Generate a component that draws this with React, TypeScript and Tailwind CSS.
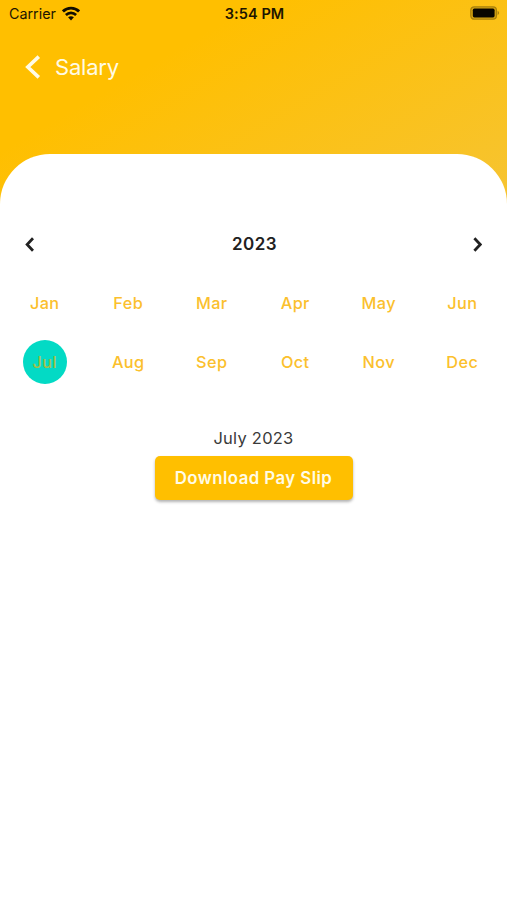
import React from 'react';

const months = ['Jan', 'Feb', 'Mar', 'Apr', 'May', 'Jun', 'Jul', 'Aug', 'Sep', 'Oct', 'Nov', 'Dec'];

function Wifi() {
  return (
    <svg className="-mt-px ml-[6px] h-[15px] w-[18px]" viewBox="0 0 18 15" fill="none" stroke="#120e00" strokeWidth="2.9">
      <path d="M0.9 5.5C5.4 1 12.6 1 17.1 5.5" />
      <path d="M3.9 9C6.8 6.1 11.2 6.1 14.1 9" strokeWidth="2.6" />
      <path d="M6.1 11.3Q9 9.2 11.9 11.3L9 14.4Z" fill="#120e00" stroke="none" />
    </svg>
  );
}

function Battery() {
  return (
    <svg className="-mt-px h-[14px] w-[30px]" viewBox="0 0 30 14">
      <rect x="0.8" y="0.8" width="25.6" height="12.4" rx="3.4" fill="#d9a610" stroke="#a8810c" strokeWidth="1.3" />
      <rect x="2.8" y="2.6" width="21.8" height="8.8" rx="1.6" fill="#080600" />
      <path d="M27.6 4.8Q30.6 7 27.6 9.2Z" fill="#a8810c" />
    </svg>
  );
}

function Chevron({ className, d, width }: { className: string; d: string; width: number }) {
  return (
    <svg className={className} viewBox="0 0 16 24" fill="none" stroke="currentColor" strokeWidth={width}>
      <path d={d} />
    </svg>
  );
}

export default function App() {
  return (
    <div className="flex h-[900px] w-full flex-col bg-white font-['Inter','Liberation_Sans',sans-serif] text-[#212121]">
      <div className="h-[210px] shrink-0 bg-[linear-gradient(150deg,#ffbf00_30%,#f6c433_100%)]">
        <div className="grid h-[27px] grid-cols-3 items-center pl-[9px] pr-[7px] text-[#1c1500]">
          <div className="flex items-center text-[14.3px]">
            <span>Carrier</span>
            <Wifi />
          </div>
          <div className="text-center text-[14.5px] font-semibold tracking-[0.1px]">3:54 PM</div>
          <div className="flex justify-end">
            <Battery />
          </div>
        </div>
        <div className="flex h-[80px] items-center pl-[25px] text-[#fffbe6]">
          <Chevron className="h-6 w-4" d="M13.8 1.6L2.8 12L13.8 22.4" width={3.6} />
          <span className="ml-[14px] mt-px text-[22px] tracking-[-0.2px]">Salary</span>
        </div>
      </div>
      <main className="-mt-[56px] flex grow flex-col rounded-t-[50px] bg-white pt-[76px]">
        <div className="flex h-[28px] items-center justify-between px-[25px]">
          <Chevron className="h-[15px] w-[10px]" d="M12.8 2L3.4 12L12.8 22" width={4.4} />
          <span className="relative top-px left-px text-[17px] font-semibold tracking-[0.5px]">2023</span>
          <Chevron className="h-[15px] w-[10px]" d="M3.8 2L13.2 12L3.8 22" width={4.4} />
        </div>
        <div className="mt-[16px] grid grid-cols-6 px-[3px] text-[16.3px] font-medium tracking-[0.4px] text-[#fbc02d]">
          {months.map((m) => (
            <div key={m} className="flex h-[58.5px] items-center justify-center">
              {m === 'Jul' ? (
                <span className="flex size-11 items-center justify-center rounded-full bg-[#03dac5] text-[#a3bf48]">{m}</span>
              ) : (
                <span>{m}</span>
              )}
            </div>
          ))}
        </div>
        <div className="mt-[34px] flex flex-col items-center">
          <p className="text-[16.5px] leading-[26px] tracking-[0.25px] text-[#3a3a3a]">July 2023</p>
          <button className="mt-[5px] h-[44px] w-[198px] rounded-[5px] bg-[#ffbf00] pt-0.5 text-[16.8px] font-semibold tracking-[0.45px] text-[#fffbe6] shadow-[0_2px_3px_rgba(0,0,0,0.3)]">
            Download Pay Slip
          </button>
        </div>
      </main>
    </div>
  );
}
